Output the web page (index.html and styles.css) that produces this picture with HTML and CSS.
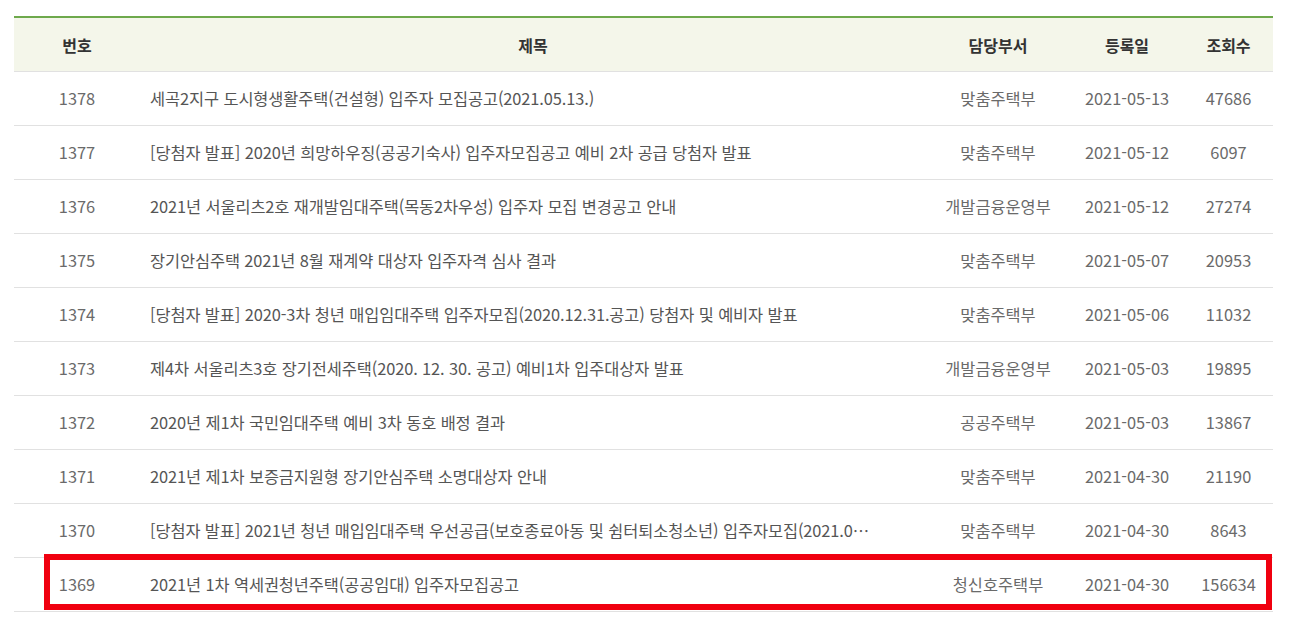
FILE: index.html
```html
<!DOCTYPE html>
<html lang="ko">
<head>
<meta charset="utf-8">
<link rel="stylesheet" href="styles.css">
</head>
<body>
<div class="wrap">
  <table class="board">
    <colgroup>
      <col class="c-no"><col class="c-title"><col class="c-dept"><col class="c-date"><col class="c-hit">
    </colgroup>
    <thead>
      <tr><th>번호</th><th>제목</th><th>담당부서</th><th>등록일</th><th>조회수</th></tr>
    </thead>
    <tbody>
      <tr><td>1378</td><td class="title"><span>세곡2지구 도시형생활주택(건설형) 입주자 모집공고(2021.05.13.)</span></td><td>맞춤주택부</td><td>2021-05-13</td><td>47686</td></tr>
      <tr><td>1377</td><td class="title"><span>[당첨자 발표] 2020년 희망하우징(공공기숙사) 입주자모집공고 예비 2차 공급 당첨자 발표</span></td><td>맞춤주택부</td><td>2021-05-12</td><td>6097</td></tr>
      <tr><td>1376</td><td class="title"><span>2021년 서울리츠2호 재개발임대주택(목동2차우성) 입주자 모집 변경공고 안내</span></td><td>개발금융운영부</td><td>2021-05-12</td><td>27274</td></tr>
      <tr><td>1375</td><td class="title"><span>장기안심주택 2021년 8월 재계약 대상자 입주자격 심사 결과</span></td><td>맞춤주택부</td><td>2021-05-07</td><td>20953</td></tr>
      <tr><td>1374</td><td class="title"><span>[당첨자 발표] 2020-3차 청년 매입임대주택 입주자모집(2020.12.31.공고) 당첨자 및 예비자 발표</span></td><td>맞춤주택부</td><td>2021-05-06</td><td>11032</td></tr>
      <tr><td>1373</td><td class="title"><span>제4차 서울리츠3호 장기전세주택(2020. 12. 30. 공고) 예비1차 입주대상자 발표</span></td><td>개발금융운영부</td><td>2021-05-03</td><td>19895</td></tr>
      <tr><td>1372</td><td class="title"><span>2020년 제1차 국민임대주택 예비 3차 동호 배정 결과</span></td><td>공공주택부</td><td>2021-05-03</td><td>13867</td></tr>
      <tr><td>1371</td><td class="title"><span>2021년 제1차 보증금지원형 장기안심주택 소명대상자 안내</span></td><td>맞춤주택부</td><td>2021-04-30</td><td>21190</td></tr>
      <tr><td>1370</td><td class="title"><span>[당첨자 발표] 2021년 청년 매입임대주택 우선공급(보호종료아동 및 쉼터퇴소청소년) 입주자모집(2021.0…</span></td><td>맞춤주택부</td><td>2021-04-30</td><td>8643</td></tr>
      <tr class="marked"><td>1369</td><td class="title"><span>2021년 1차 역세권청년주택(공공임대) 입주자모집공고</span></td><td>청신호주택부</td><td>2021-04-30</td><td>156634</td></tr>
    </tbody>
  </table>
  <div class="highlight"></div>
</div>
</body>
</html>
```

FILE: styles.css
```css
html, body {
  margin: 0;
  padding: 0;
  background: #fff;
}
body {
  font-family: "Noto Sans CJK KR", "Noto Sans", sans-serif;
  color: #666;
}
.wrap {
  position: relative;
  padding: 16px 0 0 14px;
  width: 1259px;
}
.board {
  width: 1259px;
  border-collapse: collapse;
  table-layout: fixed;
  border-top: 2px solid #6ea94c;
  font-size: 16.4px;
}
.c-no { width: 126px; }
.c-title { width: 786px; }
.c-dept { width: 144px; }
.c-date { width: 114px; }
.c-hit { width: 89px; }
.board th {
  background: #f4f6ea;
  color: #333;
  font-weight: 700;
  font-size: 16px;
  height: 53px;
  padding: 0;
  text-align: center;
  border-bottom: 1px solid #e1e1e1;
}
.board td {
  height: 51px;
  padding: 0 0 2px;
  text-align: center;
  border-bottom: 1px solid #e1e1e1;
  color: #6a6a6a;
  white-space: nowrap;
}
.board td.title {
  text-align: left;
  padding-left: 10px;
  color: #555;
  letter-spacing: -0.1px;
}
.board td.title span {
  display: block;
  white-space: nowrap;
}
.highlight {
  position: absolute;
  left: 44px;
  top: 554px;
  width: 1216px;
  height: 44px;
  border: 6px solid #f0000f;
  pointer-events: none;
}
```
